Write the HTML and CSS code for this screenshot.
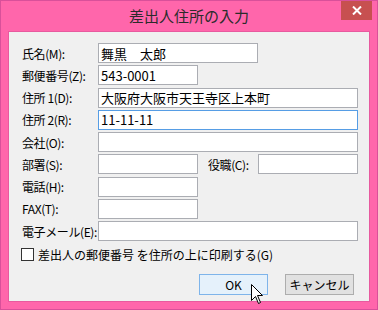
FILE: index.html
```html
<!DOCTYPE html>
<html lang="ja">
	<head>
		<meta charset="UTF-8" />
		<title>差出人住所の入力</title>
		<link rel="stylesheet" href="styles.css">
	</head>
	<body>
		<div class="window">
			<div class="titlebar">
				<span class="title">差出人住所の入力</span>
				<button class="close" type="button">
					<svg width="10" height="9" viewBox="0 0 10 9"><path d="M1 0.5 L9 8.5 M9 0.5 L1 8.5" stroke="#fff" stroke-width="2" /></svg>
				</button>
			</div>
			<div class="client">
				<div class="form">
					<div class="row">
						<label class="label">氏名(M):</label>
						<input class="field w160" type="text" value="舞黒　太郎" />
					</div>
					<div class="row">
						<label class="label">郵便番号(Z):</label>
						<input class="field w100" type="text" value="543-0001" />
					</div>
					<div class="row">
						<label class="label">住所 1(D):</label>
						<input class="field w260" type="text" value="大阪府大阪市天王寺区上本町" />
					</div>
					<div class="row">
						<label class="label">住所 2(R):</label>
						<input class="field w260 focused" type="text" value="11-11-11" />
					</div>
					<div class="row">
						<label class="label">会社(O):</label>
						<input class="field w260" type="text" />
					</div>
					<div class="row">
						<label class="label">部署(S):</label>
						<input class="field w100" type="text" />
						<label class="label sub">役職(C):</label>
						<input class="field w100" type="text" />
					</div>
					<div class="row">
						<label class="label">電話(H):</label>
						<input class="field w100" type="text" />
					</div>
					<div class="row">
						<label class="label">FAX(T):</label>
						<input class="field w100" type="text" />
					</div>
					<div class="row">
						<label class="label">電子メール(E):</label>
						<input class="field w260" type="text" />
					</div>
				</div>
				<label class="check">
					<span class="box"></span>
					<span>差出人の郵便番号 を住所の上に印刷する(G)</span>
				</label>
				<div class="buttons">
					<button class="btn default" type="button">OK</button>
					<button class="btn" type="button">キャンセル</button>
				</div>
				<svg class="cursor" width="13" height="21" viewBox="0 0 13 21">
					<path d="M0.5 0.5 L0.5 16.5 L4.5 12.5 L7.5 19.5 L9.5 18.5 L6.5 11.5 L11.5 11.5 Z" fill="#fff" stroke="#000" stroke-width="1" />
				</svg>
			</div>
		</div>
	</body>
</html>
```

FILE: styles.css
```css
body {
	margin: 0;
	font-family: 'Noto Sans CJK JP', 'Noto Sans', sans-serif;
	font-size: 12px;
	color: #000;
}
.window {
	width: 378px;
	height: 310px;
	box-sizing: border-box;
	background-color: #ff66ab;
	border: 1px solid #d9509a;
	padding: 0 7px 7px 7px;
	display: flex;
	flex-direction: column;
}
.titlebar {
	height: 30px;
	position: relative;
	display: flex;
	align-items: center;
	justify-content: center;
}
.title {
	font-size: 15px;
	color: #2b2b2b;
	margin-top: -1px;
}
.close {
	position: absolute;
	top: 0;
	right: -2px;
	width: 31px;
	height: 19px;
	border: none;
	padding: 0;
	background-color: #c75050;
	display: flex;
	align-items: center;
	justify-content: center;
}
.client {
	flex: 1;
	position: relative;
	background-color: #f0f0f0;
	border: 1px solid #e85a9f;
	padding: 11px 0 0 13px;
}
.form {
	display: flex;
	flex-direction: column;
	gap: 2.25px;
}
.row {
	display: flex;
	align-items: center;
	height: 20px;
}
.label {
	width: 76px;
	flex: none;
	white-space: nowrap;
	letter-spacing: -0.4px;
}
.label.sub {
	width: 50px;
	margin-left: 10px;
}
.field {
	box-sizing: border-box;
	height: 20px;
	border: 1px solid #abadb3;
	background-color: #fff;
	padding: 0 2px;
	font-family: 'Noto Sans CJK JP', sans-serif;
	font-size: 13px;
	color: #000;
	outline: none;
}
.field.focused {
	border-color: #569de5;
}
.w100 {
	width: 100px;
}
.w160 {
	width: 160px;
}
.w260 {
	width: 260px;
}
.check {
	display: flex;
	align-items: center;
	gap: 4px;
	margin: 6px 0 0 -1px;
	height: 14px;
}
.box {
	width: 11px;
	height: 11px;
	border: 1px solid #333;
	background-color: #fff;
}
.buttons {
	display: flex;
	justify-content: flex-end;
	gap: 17px;
	margin: 13px 15px 0 0;
}
.btn {
	width: 69px;
	height: 21px;
	box-sizing: border-box;
	border: 1px solid #adadad;
	background-color: #e1e1e1;
	font-family: 'Noto Sans CJK JP', sans-serif;
	font-size: 12px;
	color: #000;
	padding: 0;
}
.btn.default {
	border-color: #7eb4ea;
	background-color: #e5f1fb;
}
.cursor {
	position: absolute;
	left: 242px;
	top: 252px;
}
```
